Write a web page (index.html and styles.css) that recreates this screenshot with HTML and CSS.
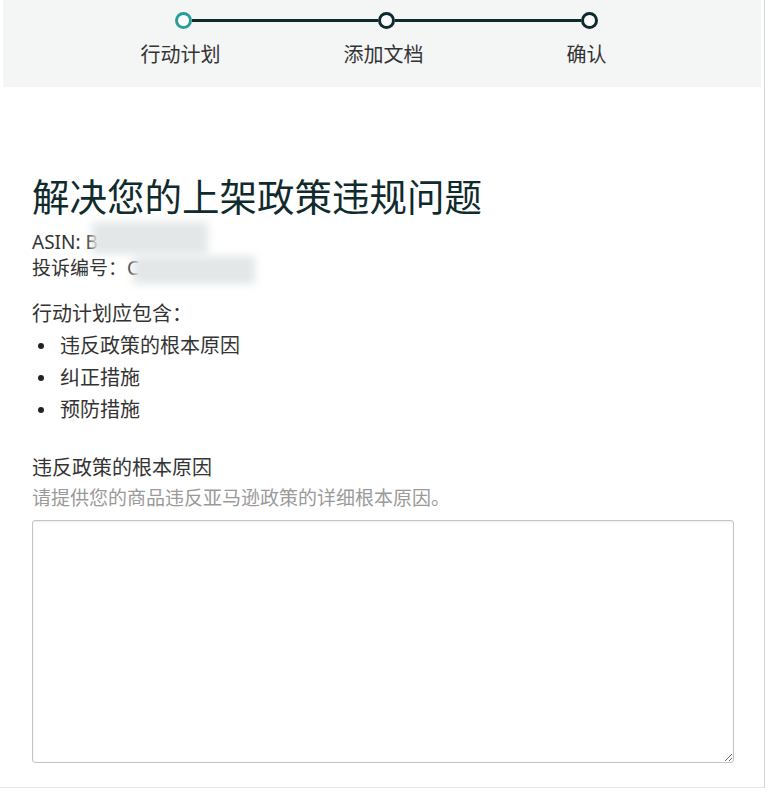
FILE: index.html
```html
<!DOCTYPE html>
<html lang="zh-CN">
<head>
    <meta charset="UTF-8">
    <meta name="viewport" content="width=device-width, initial-scale=1.0">
    <title>解决您的上架政策违规问题</title>
    <link rel="stylesheet" href="styles.css">
</head>
<body>
    <div class="page">
        <div class="stepper">
            <div class="track">
                <span class="dot dot-active"></span>
                <span class="bar"></span>
                <span class="dot"></span>
                <span class="bar"></span>
                <span class="dot"></span>
            </div>
            <div class="labels">
                <span class="label">行动计划</span>
                <span class="label">添加文档</span>
                <span class="label">确认</span>
            </div>
        </div>

        <div class="content">
            <h1>解决您的上架政策违规问题</h1>
            <p class="meta">ASIN: B<span class="blur blur-asin"></span></p>
            <p class="meta">投诉编号：C<span class="blur blur-case"></span></p>

            <p class="intro">行动计划应包含：</p>
            <ul class="plan-list">
                <li>违反政策的根本原因</li>
                <li>纠正措施</li>
                <li>预防措施</li>
            </ul>

            <label class="field-label" for="root-cause">违反政策的根本原因</label>
            <p class="hint">请提供您的商品违反亚马逊政策的详细根本原因。</p>
            <textarea id="root-cause"></textarea>
        </div>
    </div>
</body>
</html>
```

FILE: styles.css
```css
body {
    margin: 0;
    padding: 0;
    background-color: #fff;
    font-family: "Noto Sans", "Noto Sans CJK SC", sans-serif;
    color: #333;
}

.page {
    width: 765px;
    height: 788px;
    border-right: 1px solid #d6d6d6;
    border-bottom: 1px solid #e6e6e6;
    box-sizing: border-box;
}

/* stepper */
.stepper {
    margin: 0 3px;
    height: 87px;
    background-color: #f4f6f6;
    padding-top: 12px;
    box-sizing: border-box;
}

.track {
    display: flex;
    align-items: center;
    margin-left: 172px;
}

.dot {
    width: 11px;
    height: 11px;
    border: 3px solid #0d2a2f;
    border-radius: 50%;
    background-color: #fff;
    flex-shrink: 0;
}

.dot-active {
    border-color: #2a9d98;
}

.bar {
    width: 186px;
    height: 3px;
    background-color: #0d2a2f;
}

.labels {
    display: flex;
    margin-left: 76px;
    margin-top: 13px;
}

.label {
    width: 203px;
    text-align: center;
    font-size: 20px;
    line-height: 26px;
    color: #333;
}

/* content */
.content {
    padding: 88px 29px 0 32px;
}

h1 {
    margin: 0;
    font-size: 37.5px;
    line-height: 44px;
    font-weight: 400;
    color: #0f2b2e;
}

.meta {
    margin: 0;
    font-size: 19px;
    line-height: 26px;
    color: #333;
}

.meta:first-of-type {
    margin-top: 10px;
}

.blur {
    display: inline-block;
    vertical-align: middle;
    background-color: #e3e7e8;
    filter: blur(4px);
}

.blur-asin {
    width: 116px;
    height: 32px;
    margin-left: -6px;
    margin-top: -12px;
}

.blur-case {
    width: 122px;
    height: 28px;
    margin-left: -6px;
}

.intro {
    margin: 14px 0 0;
    font-size: 20px;
    line-height: 32px;
}

.plan-list {
    list-style: none;
    margin: 0;
    padding: 0;
}

.plan-list li {
    display: flex;
    align-items: center;
    font-size: 20px;
    line-height: 32px;
}

.plan-list li::before {
    content: "";
    width: 6px;
    height: 6px;
    border-radius: 50%;
    background-color: #222;
    margin: 0 16px 0 6px;
}

.field-label {
    display: block;
    margin-top: 28px;
    font-size: 20px;
    line-height: 28px;
    color: #333;
}

.hint {
    margin: 3px 0 0;
    font-size: 19px;
    line-height: 26px;
    color: #9a9a9a;
}

textarea {
    display: block;
    width: 702px;
    height: 243px;
    margin-top: 9px;
    border: 1px solid #c4c4c4;
    border-radius: 3px;
    box-shadow: inset 0 1px 2px rgba(0, 0, 0, 0.08);
    box-sizing: border-box;
    font-family: inherit;
    font-size: 16px;
}
```
